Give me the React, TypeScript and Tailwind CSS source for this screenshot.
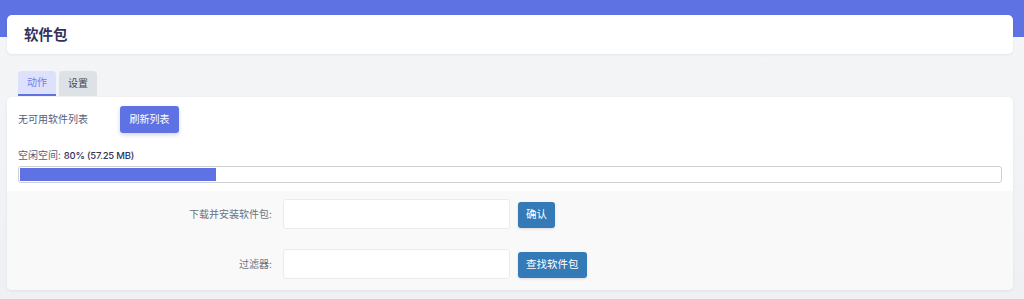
import React from "react";

const font = { fontFamily: 'Inter, "Noto Sans CJK SC", sans-serif' };

function FormRow({ label, button }: { label: string; button: string }) {
  return (
    <div className="flex items-start">
      <div className="w-[265px] text-right text-[10px] text-[#6b7280] leading-[30px]">{label}</div>
      <input className="ml-[11px] h-[30px] w-[227px] rounded-[3px] border border-[#e9ecef] bg-white outline-none" />
      <button className="ml-[8px] mt-[3px] h-[26px] rounded-[3px] bg-[#337ab7] px-[8px] text-[10.5px] text-white shadow-sm">
        {button}
      </button>
    </div>
  );
}

export default function App() {
  const used = 20;
  return (
    <div
      style={font}
      className="min-h-[299px] bg-[linear-gradient(to_bottom,#5e72e4_37px,#f4f5f7_37px,#eef0f3_299px)] pl-[7px] pr-[11px] pt-[15px] pb-[9px]"
    >
      <div className="flex h-[39px] items-center rounded-[5px] bg-white px-[17px] shadow-[0_1px_3px_rgba(50,50,93,0.08)]">
        <h1 className="text-[14.5px] font-bold text-[#32325d]">软件包</h1>
      </div>

      <div className="mt-[17px] ml-[11px] flex gap-[3px]">
        <div className="flex h-[25px] w-[38px] items-center justify-center rounded-t-[4px] border-b-2 border-[#5e72e4] bg-[#dde1fc] text-[10px] text-[#6f80e8]">
          动作
        </div>
        <div className="flex h-[25px] w-[38px] items-center justify-center rounded-t-[4px] bg-[#dee2e6] text-[10px] text-[#3f4550]">
          设置
        </div>
      </div>

      <div className="mt-px overflow-hidden rounded-[5px] bg-white shadow-[0_1px_3px_rgba(50,50,93,0.08)]">
        <div className="px-[11px] pt-[9px] pb-[8px]">
          <div className="flex items-center">
            <span className="text-[10px] text-[#525f7f]">无可用软件列表</span>
            <button className="ml-[32px] h-[27px] w-[59px] rounded-[3px] bg-[#5e72e4] text-[10px] text-white shadow-[0_2px_4px_rgba(50,50,93,0.2)]">
              刷新列表
            </button>
          </div>
          <div className="mt-[15px] text-[10px] text-[#525f7f]">
            空闲空间: <span className="text-[9.5px] font-medium tracking-[-0.2px] text-[#32325d]">80% (57.25 MB)</span>
          </div>
          <div className="mt-[3px] h-[17px] rounded-[3px] border border-[#cfcfcf] bg-white p-px">
            <div className="h-full bg-[#5e72e4]" style={{ width: `${used}%` }} />
          </div>
        </div>
        <div className="flex flex-col gap-[20px] bg-[#f9f9f9] pt-[8px] pb-[11px]">
          <FormRow label="下载并安装软件包:" button="确认" />
          <FormRow label="过滤器:" button="查找软件包" />
        </div>
      </div>
    </div>
  );
}
